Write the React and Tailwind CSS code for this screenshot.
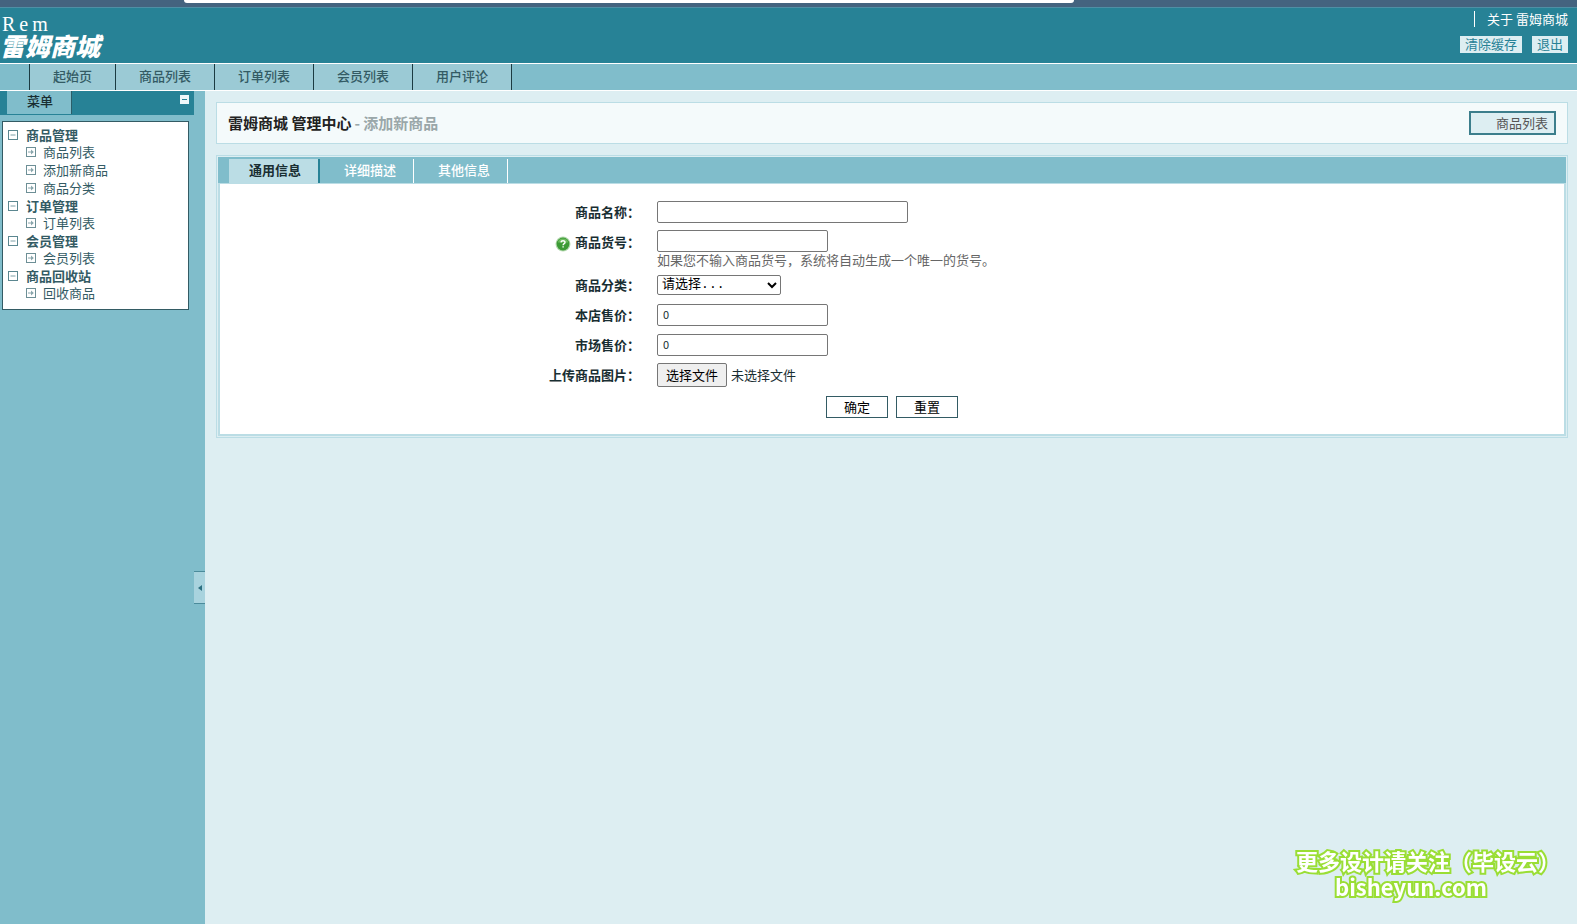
const navItems = ['商品列表', '订单列表', '会员列表', '用户评论']

const menuGroups = [
  { title: '商品管理', items: ['商品列表', '添加新商品', '商品分类'] },
  { title: '订单管理', items: ['订单列表'] },
  { title: '会员管理', items: ['会员列表'] },
  { title: '商品回收站', items: ['回收商品'] },
]

function CollapseIcon() {
  return (
    <svg width="10" height="10" viewBox="0 0 10 10" fill="none" className="shrink-0">
      <rect x="0.5" y="0.5" width="9" height="9" stroke="#5b8790" />
      <path d="M2.5 5h5" stroke="#7ea0a7" />
    </svg>
  )
}

function LeafIcon() {
  return (
    <svg width="10" height="10" viewBox="0 0 10 10" fill="none" className="shrink-0">
      <rect x="0.5" y="0.5" width="9" height="9" stroke="#6d8f96" />
      <path d="M2 5h5" stroke="#8aa6ac" />
      <path d="M5 2.5v5L7.8 5z" fill="#8aa6ac" />
    </svg>
  )
}

function HelpIcon() {
  return (
    <svg width="16" height="16" viewBox="0 0 16 16">
      <circle cx="8" cy="8" r="7.5" fill="#b5d9b0" />
      <circle cx="8" cy="8" r="6.4" fill="#3c9a35" />
      <path d="M2.8 6.6a5.3 5 0 0 1 10.4 0z" fill="#6dbb5f" />
      <path
        d="M6 6.4C6.1 4.2 10 4.2 10 6.4 10 7.7 8.1 7.6 8.1 9.2M8.1 10.2v1.4"
        stroke="#fff"
        strokeWidth="1.4"
        fill="none"
      />
    </svg>
  )
}

function Header() {
  return (
    <header>
      <div className="h-[7px] bg-[#44637f] pl-[184px]">
        <div className="h-[3px] w-[67%] max-w-[890px] rounded-b-sm bg-white" />
      </div>
      <div className="flex h-14 justify-between border-t border-[#4f8fa5] bg-[#278296] pr-[9px]">
        <h1 className="pt-[6px] text-white">
          <span className="flex h-5 gap-1 pl-[2px] font-['Liberation_Serif',serif] text-xl leading-5">
            <span>R</span>
            <span>e</span>
            <span>m</span>
          </span>
          <span className="block text-[25px] leading-[22px] font-black italic">雷姆商城</span>
        </h1>
        <div className="flex flex-col items-end gap-[9px] pt-[3px]">
          <a href="#about" className="border-l border-white pl-3 leading-4 text-white">
            关于 雷姆商城
          </a>
          <div className="flex gap-[10px] text-[#278296]">
            <a href="#clear" className="h-[17px] bg-[#ddeef2] px-[5px] leading-4">清除缓存</a>
            <a href="#logout" className="h-[17px] bg-[#ddeef2] px-[5px] leading-4">退出</a>
          </div>
        </div>
      </div>
      <nav className="flex h-7 border-y border-white bg-[#80bdcb] pl-[29px] font-medium text-[#335b64]">
        <a href="#start" className="border-x border-[#1b3b42] bg-[#9bcad5] px-[23px] leading-6">
          起始页
        </a>
        {navItems.map((name) => (
          <a key={name} href="#nav" className="border-r border-[#1b3b42] bg-[#9bcad5] px-[23px] leading-6">
            {name}
          </a>
        ))}
      </nav>
    </header>
  )
}

function Sidebar() {
  return (
    <aside className="flex w-[205px] shrink-0 bg-[#80bdcb]">
      <div className="w-[194px]">
        <div className="flex h-6 items-start justify-between bg-[#278296] pl-[7px]">
          <div className="h-[23px] border-r border-[#2b5e69] bg-[#80bdcb] pr-[18px] pl-5 leading-5 font-medium text-[#192e32]">
            菜单
          </div>
          <button type="button" aria-label="收起菜单" className="mt-1 mr-[5px] flex h-[9px] w-[9px] items-center justify-center bg-[#eef7f9]">
            <span className="h-px w-[5px] bg-[#278296]" />
          </button>
        </div>
        <div className="mt-[6px] mr-[5px] ml-[2px] border border-[#335b64] bg-white px-[5px] pt-1 pb-[7px] text-[#335b64]">
          <ul>
            {menuGroups.map((group) => (
              <li key={group.title}>
                <div className="flex h-[17px] items-center gap-2 font-bold">
                  <CollapseIcon />
                  {group.title}
                </div>
                <ul>
                  {group.items.map((item) => (
                    <li key={item} className="h-[18px] pl-[18px]">
                      <a href="#item" className="flex h-[18px] items-center gap-[7px]">
                        <LeafIcon />
                        {item}
                      </a>
                    </li>
                  ))}
                </ul>
              </li>
            ))}
          </ul>
        </div>
      </div>
      <div className="flex-1 pt-[480px]">
        <button type="button" aria-label="隐藏菜单栏" className="flex h-[33px] w-full items-center justify-center border-y border-[#4b8b9b] bg-[#a8d3de]">
          <svg width="4" height="6" viewBox="0 0 4 6">
            <path d="M4 0v6L0 3z" fill="#2c6f80" />
          </svg>
        </button>
      </div>
    </aside>
  )
}

function Field({ id, label, help, children }) {
  return (
    <div className="grid grid-cols-[32%_1fr]">
      <div className="flex items-start justify-end gap-1 pr-[10px] font-bold">
        {help && (
          <button type="button" aria-label="帮助" className="mt-[6px]">
            <HelpIcon />
          </button>
        )}
        <label htmlFor={id} className="leading-[23px]">{label}：</label>
      </div>
      <div className="flex min-h-6 flex-col items-start justify-center pl-[7px]">{children}</div>
    </div>
  )
}

const inputClass = 'block h-[22px] rounded-xs border border-[#767676] bg-white px-[5px] pb-[2px] text-[11px]'

function ProductForm() {
  return (
    <form className="flex flex-col gap-[6px] pt-4 pb-4 text-[#192e32]">
      <Field id="name" label="商品名称">
        <input id="name" type="text" className={`${inputClass} w-[251px]`} />
      </Field>
      <Field id="sn" label="商品货号" help>
        <input id="sn" type="text" className={`${inputClass} w-[171px]`} />
        <p className="leading-[15px] text-[#666]">
          如果您不输入商品货号，系统将自动生成一个唯一的货号。
        </p>
      </Field>
      <Field id="category" label="商品分类">
        <select
          id="category"
          className="block h-5 w-[124px] rounded-xs border border-[#767676] bg-white pb-[2px] font-['Liberation_Mono','Noto_Sans_CJK_SC',monospace] text-[13px] text-black"
        >
          <option>请选择...</option>
        </select>
      </Field>
      <Field id="price" label="本店售价">
        <input id="price" type="text" defaultValue="0" className={`${inputClass} w-[171px]`} />
      </Field>
      <Field id="market" label="市场售价">
        <input id="market" type="text" defaultValue="0" className={`${inputClass} w-[171px]`} />
      </Field>
      <Field id="image" label="上传商品图片">
        <div className="flex items-center gap-1">
          <label htmlFor="image" className="h-6 rounded-xs border border-[#767676] bg-[#efefef] px-2 leading-[22px] text-black">
            选择文件
          </label>
          <input id="image" type="file" className="sr-only" />
          <span className="leading-[22px]">未选择文件</span>
        </div>
      </Field>
      <div className="flex justify-center gap-2 pt-[3px]">
        <button type="submit" className="h-[22px] w-[62px] border border-[#335b64] bg-white text-black">确定</button>
        <button type="reset" className="h-[22px] w-[62px] border border-[#335b64] bg-white text-black">重置</button>
      </div>
    </form>
  )
}

function Main() {
  return (
    <main className="min-w-0 flex-1 bg-[#ddeef2] pt-[11px] pr-[9px] pl-[11px]">
      <div className="flex h-[42px] items-center justify-between border border-[#bbdde5] bg-[#f4fafb] px-[11px]">
        <h2 className="flex gap-[3px] text-[15px] font-bold text-[#222]">
          雷姆商城 管理中心<span className="text-[#9aa7a9]">- 添加新商品</span>
        </h2>
        <a href="#list" className="border-2 border-[#3c7e8c] bg-[#ddeef2] pr-[6px] pl-[25px] leading-5 text-[#555]">
          商品列表
        </a>
      </div>
      <section className="mt-[11px] border border-[#bbdde5] p-px">
        <div role="tablist" className="flex h-[26px] bg-[#80bdcb] pt-[2px] pl-[11px] leading-[22px] font-medium">
          <button type="button" role="tab" aria-selected="true" className="border-r-2 border-[#278296] bg-[#bbdde5] pr-[17px] pb-[2px] pl-5 font-bold text-[#192e32]">
            通用信息
          </button>
          <button type="button" role="tab" aria-selected="false" className="border-r border-white pr-[17px] pb-[2px] pl-6 text-white">详细描述</button>
          <button type="button" role="tab" aria-selected="false" className="border-r border-white pr-[17px] pb-[2px] pl-6 text-white">其他信息</button>
        </div>
        <div className="border-x-2 border-t border-b-2 border-[#bbdde5] bg-white">
          <ProductForm />
        </div>
      </section>
    </main>
  )
}

export default function App() {
  return (
    <div className="flex min-h-screen flex-col font-['Noto_Sans_CJK_SC',sans-serif] text-[13px]">
      <Header />
      <div className="flex flex-1">
        <Sidebar />
        <Main />
      </div>
      <div className="pointer-events-none fixed right-[17px] bottom-[25px] text-[22px] leading-[26px] font-bold text-white [-webkit-text-stroke:4px_#9ade35] [paint-order:stroke_fill]">
        <p>更多设计请关注（毕设云）</p>
        <p className="pl-[39px]">bisheyun.com</p>
      </div>
    </div>
  )
}
